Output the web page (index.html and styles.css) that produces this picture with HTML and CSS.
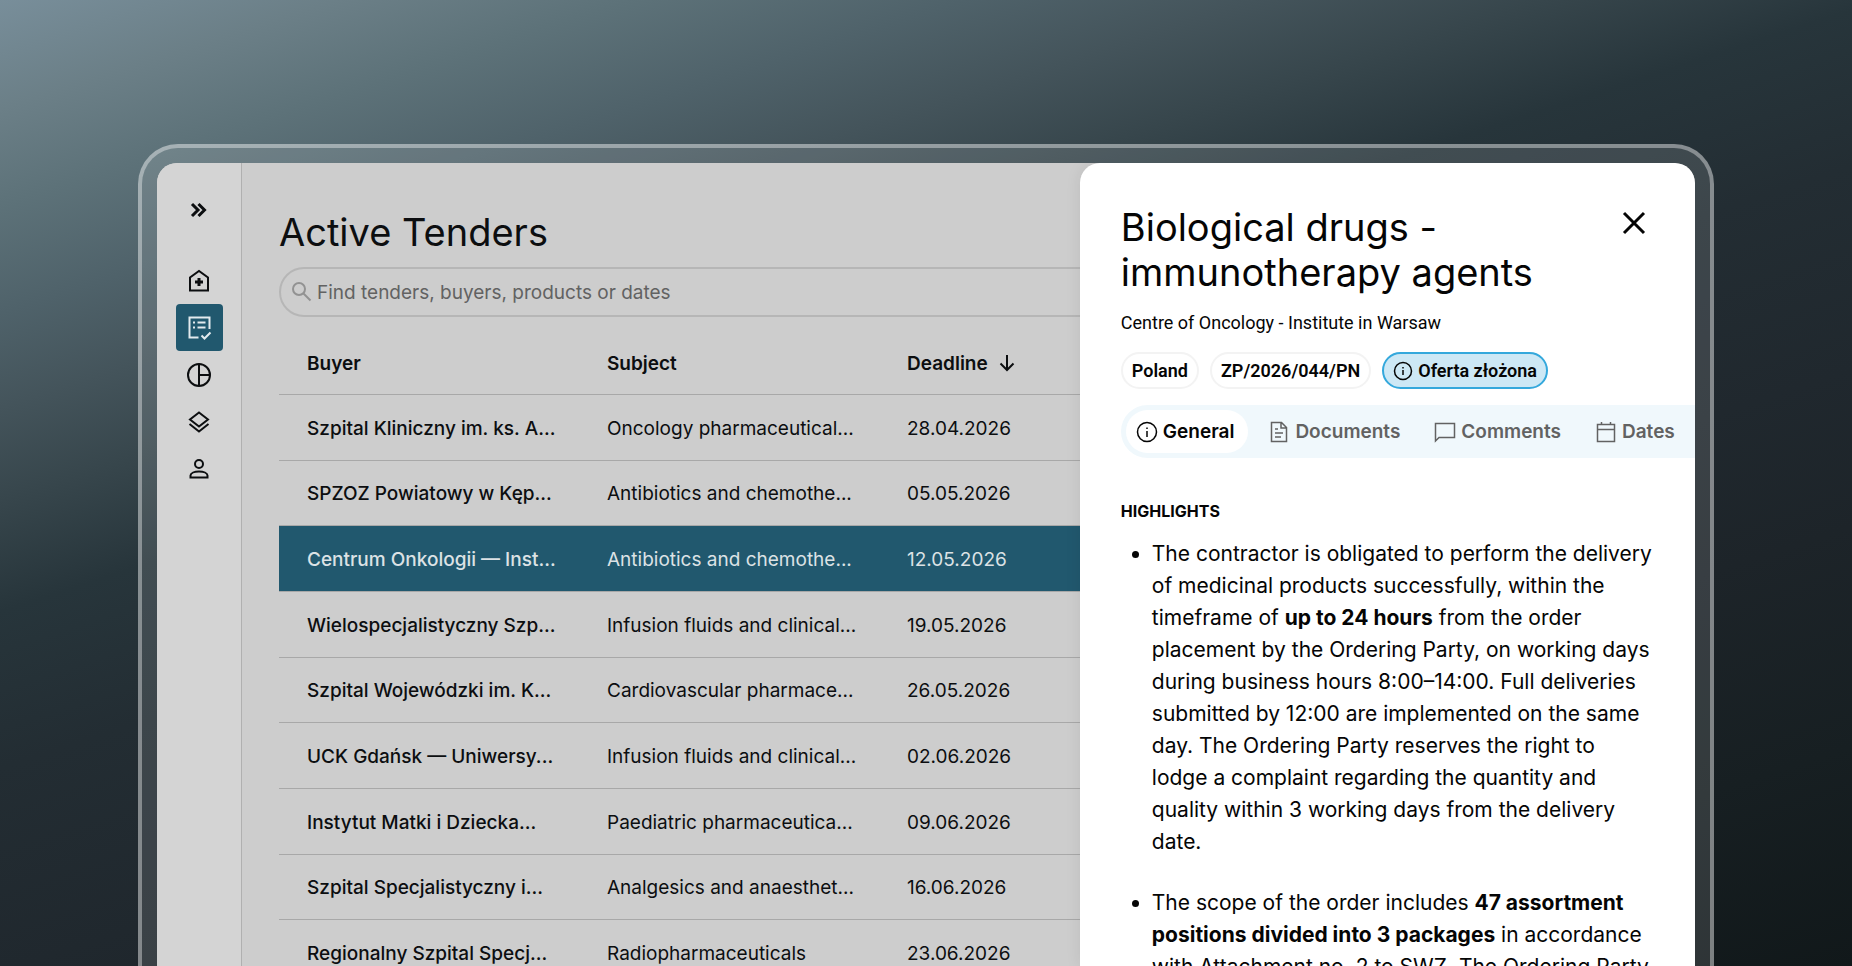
FILE: index.html
```html
<!DOCTYPE html>
<html lang="en">
<head>
    <meta charset="UTF-8">
    <meta name="viewport" content="width=device-width, initial-scale=1.0">
    <title>Active Tenders</title>
    <link rel="stylesheet" href="styles.css">
</head>
<body>

    <div class="device">
        <div class="screen">

            <aside class="sidebar">
                <button class="side-item toggle" aria-label="Expand menu">
                    <svg width="24" height="24" viewBox="0 0 24 24"><path d="M5 6l6 6-6 6M11.500 6l6 6-6 6"/></svg>
                </button>
                <nav class="side-nav">
                    <a class="side-item" href="#home" aria-label="Home">
                        <svg width="24" height="24" viewBox="0 0 24 24"><path d="M3 21.500V8.500L12 2l9 6.500v13z"/><path class="thick" d="M12 9v8M8 13h8"/></svg>
                    </a>
                    <a class="side-item active" href="#tenders" aria-label="Tenders">
                        <svg width="26" height="26" viewBox="0 0 26 26"><path d="M12.500 22.500H3.500v-20h20v11.500M7 7.500h2M7 12.500h2M11.500 7.500h8M11.500 12.500h8M15.500 20.500l3 3 6-6"/></svg>
                    </a>
                    <a class="side-item" href="#reports" aria-label="Reports">
                        <svg width="24" height="24" viewBox="0 0 24 24"><circle cx="12" cy="12" r="11"/><path d="M12 1v22M12 12h11"/></svg>
                    </a>
                    <a class="side-item" href="#products" aria-label="Products">
                        <svg width="24" height="24" viewBox="0 0 24 24"><path d="M12 2.500l9 7-9 7-9-7zM2.500 14l9.500 7.500 9.500-7.500"/></svg>
                    </a>
                    <a class="side-item" href="#profile" aria-label="Profile">
                        <svg width="24" height="24" viewBox="0 0 24 24"><circle cx="12" cy="7" r="4"/><path d="M3.500 20.500v-2c0-2.500 4-4 8.500-4s8.500 1.500 8.500 4v2z"/></svg>
                    </a>
                </nav>
            </aside>

            <main class="content">
                <h1>Active Tenders</h1>

                <label class="search">
                    <svg width="20" height="20" viewBox="0 0 20 20"><circle cx="7" cy="7" r="6"/><path d="M11.500 11.500L18.500 18.500"/></svg>
                    <input type="search" placeholder="Find tenders, buyers, products or dates" aria-label="Search tenders">
                </label>

                <table class="tenders">
                    <thead>
                        <tr>
                            <th scope="col">Buyer</th>
                            <th scope="col">Subject</th>
                            <th scope="col">Deadline <svg width="16" height="18" viewBox="0 0 16 18"><path d="M8 1v15M1.500 9.500L8 16l6.500-6.500"/></svg></th>
                        </tr>
                    </thead>
                    <tbody>
                        <tr><td>Szpital Kliniczny im. ks. A...</td><td>Oncology pharmaceutical...</td><td>28.04.2026</td></tr>
                        <tr><td>SPZOZ Powiatowy w Kęp...</td><td>Antibiotics and chemothe...</td><td>05.05.2026</td></tr>
                        <tr class="selected"><td>Centrum Onkologii — Inst...</td><td>Antibiotics and chemothe...</td><td>12.05.2026</td></tr>
                        <tr><td>Wielospecjalistyczny Szp...</td><td>Infusion fluids and clinical...</td><td>19.05.2026</td></tr>
                        <tr><td>Szpital Wojewódzki im. K...</td><td>Cardiovascular pharmace...</td><td>26.05.2026</td></tr>
                        <tr><td>UCK Gdańsk — Uniwersy...</td><td>Infusion fluids and clinical...</td><td>02.06.2026</td></tr>
                        <tr><td>Instytut Matki i Dziecka...</td><td>Paediatric pharmaceutica...</td><td>09.06.2026</td></tr>
                        <tr><td>Szpital Specjalistyczny i...</td><td>Analgesics and anaesthet...</td><td>16.06.2026</td></tr>
                        <tr><td>Regionalny Szpital Specj...</td><td>Radiopharmaceuticals</td><td>23.06.2026</td></tr>
                    </tbody>
                </table>
            </main>

            <section class="panel">
                <div class="panel-head">
                    <h2>Biological drugs - immunotherapy agents</h2>
                    <button class="close" aria-label="Close">
                        <svg width="24" height="24" viewBox="0 0 24 24"><path d="M2 2l20 20M22 2L2 22"/></svg>
                    </button>
                </div>
                <p class="buyer">Centre of Oncology - Institute in Warsaw</p>

                <div class="chips">
                    <span class="chip">Poland</span>
                    <span class="chip">ZP/2026/044/PN</span>
                    <span class="chip status">
                        <svg width="20" height="20" viewBox="0 0 20 20"><circle cx="10" cy="10" r="8.500"/><path d="M10 9v5M10 6v1.500"/></svg>
                        Oferta złożona
                    </span>
                </div>

                <nav class="tabs">
                    <button class="tab active">
                        <svg width="22" height="22" viewBox="0 0 22 22"><circle cx="11" cy="11" r="9.500"/><path d="M11 10v6M11 6.500v1.500"/></svg>
                        General
                    </button>
                    <button class="tab">
                        <svg width="22" height="22" viewBox="0 0 22 22"><path d="M3.500 1.500h10l5 5v14h-15zM13 2v5h5M7 8h3M7 12h8M7 16h6"/></svg>
                        Documents
                    </button>
                    <button class="tab">
                        <svg width="22" height="22" viewBox="0 0 22 22"><path d="M1.500 20V2.500h19v14H5z"/></svg>
                        Comments
                    </button>
                    <button class="tab">
                        <svg width="22" height="22" viewBox="0 0 22 22"><path d="M2.500 3.500h17v17h-17zM2.500 8.500h17M6.500 1v2.500M15.500 1v2.500"/></svg>
                        Dates
                    </button>
                </nav>

                <div class="panel-body">
                    <h3>HIGHLIGHTS</h3>
                    <ul>
                        <li>The contractor is obligated to perform the delivery of medicinal products successfully, within the timeframe of <strong>up to 24 hours</strong> from the order placement by the Ordering Party, on working days during business hours 8:00–14:00. Full deliveries submitted by 12:00 are implemented on the same day. The Ordering Party reserves the right to lodge a complaint regarding the quantity and quality within 3 working days from the delivery date.</li>
                        <li>The scope of the order includes <strong>47 assortment positions divided into 3 packages</strong> in accordance with Attachment no. 2 to SWZ. The Ordering Party</li>
                    </ul>
                </div>
            </section>

        </div>
    </div>

</body>
</html>
```
FILE: styles.css
```css
* {
    box-sizing: border-box;
}

body {
    margin: 0;
    height: 100vh;
    overflow: hidden;
    font-family: Inter, "Liberation Sans", sans-serif;
    color: #0c0e10;
    background: linear-gradient(162deg, #788e9a 0%, #6b7f87 7%, #5d7279 13%, #4f626a 20%, #44545b 26%, #37464c 32%, #27353b 39%, #232d33 49%, #20282e 62%, #1d2429 72%, #171f22 86%, #11181a 100%);
}

h1, h2, h3, p, ul {
    margin: 0;
}

button, input {
    font-family: inherit;
    background: none;
    border: none;
    padding: 0;
}

svg {
    flex: none;
    fill: none;
    stroke: currentColor;
    stroke-width: 2;
}

/* Device frame */
.device {
    margin: 144px 138px 0;
    height: calc(100vh - 144px);
    padding: 15px 15px 0;
    border: 4px solid rgba(255, 255, 255, 0.45);
    border-bottom: none;
    border-radius: 40px 40px 0 0;
    background-color: rgba(255, 255, 255, 0.12);
    background-clip: padding-box;
}

.screen {
    position: relative;
    display: flex;
    height: 100%;
    overflow: hidden;
    border-radius: 20px 20px 0 0;
    background-color: #cdcdcd;
}

/* Sidebar */
.sidebar {
    flex: none;
    display: flex;
    flex-direction: column;
    align-items: center;
    gap: 24px;
    width: 85px;
    padding-top: 23px;
    background-color: #d4d4d4;
    border-right: 1px solid #b0b0b0;
}

.side-item {
    display: flex;
    align-items: center;
    justify-content: center;
    width: 47px;
    height: 47px;
    border-radius: 4px;
    color: #0c0e10;
}

.side-item.active {
    background-color: #21586e;
    color: #e3eaee;
}

.toggle svg, .thick {
    stroke-width: 3;
}

/* Tender list */
.content {
    flex: 1;
    padding: 47px 37px 0;
}

h1, h2 {
    font-size: 38px;
    font-weight: 400;
    line-height: 45px;
}

.search {
    display: flex;
    align-items: center;
    gap: 5px;
    height: 50px;
    margin-top: 12px;
    padding: 0 11px;
    border: 2px solid #b6b6b6;
    border-radius: 25px;
    color: #929292;
}

.search input {
    flex: 1;
    font-size: 19px;
    outline: none;
}

.search input::placeholder {
    color: #626262;
}

.tenders {
    width: 100%;
    height: 656px;
    margin-top: 13px;
    table-layout: fixed;
    border-spacing: 0;
    font-size: 19px;
}

.tenders th, .tenders td {
    height: 65px;
    padding: 2px 0 0 28px;
    border-bottom: 1px solid #a8a8a8;
    text-align: left;
    white-space: nowrap;
}

.tenders th {
    font-weight: 600;
}

.tenders th:nth-child(-n+2) {
    width: 300px;
}

.tenders th svg {
    margin-left: 6px;
    vertical-align: -2px;
}

.tenders td:first-child {
    font-weight: 500;
}

.tenders .selected {
    background-color: #21586e;
    color: #dce2e5;
}

/* Details panel, slides over the list */
.panel {
    position: absolute;
    top: 0;
    right: 0;
    bottom: 0;
    width: 40%;
    overflow: hidden;
    padding: 42px 0 0 41px;
    border-radius: 20px 20px 0 0;
    background-color: #fff;
    color: #050505;
    box-shadow: 0 0 16px rgba(0, 0, 0, 0.08);
}

.panel-head {
    display: flex;
    justify-content: space-between;
    align-items: flex-start;
    padding-right: 49px;
}

.panel-head h2 {
    max-width: 440px;
}

.close {
    display: flex;
    padding-top: 6px;
    color: #050505;
}

.close svg {
    stroke-width: 3;
}

.buyer {
    margin-top: 16px;
    font-family: Roboto, sans-serif;
    font-size: 18px;
    line-height: 24px;
}

.chips {
    display: flex;
    gap: 11px;
    margin-top: 17px;
}

.chip {
    display: flex;
    align-items: center;
    gap: 5px;
    height: 37px;
    padding: 0 9px;
    border: 2px solid #f3f3f3;
    border-radius: 19px;
    font-family: Roboto, sans-serif;
    font-size: 18px;
    font-weight: 600;
}

.chip.status {
    border-color: #34a8dc;
    background-color: #cde8f5;
}

.chip svg, .tab svg {
    stroke-width: 1.500;
}

.tabs {
    display: flex;
    gap: 10px;
    margin-top: 16px;
    padding: 5px;
    border-radius: 27px 0 0 27px;
    background-color: #f0f8fc;
}

.tab {
    display: flex;
    align-items: center;
    gap: 5px;
    height: 43px;
    padding: 0 14px 0 10px;
    border-radius: 22px;
    font-size: 19px;
    font-weight: 600;
    color: #626262;
}

.tab.active {
    background-color: #fff;
    color: #050505;
}

.panel-body {
    padding: 43px 40px 0 0;
}

h3 {
    font-size: 16px;
    font-weight: 700;
    line-height: 20px;
}

ul {
    margin-top: 17px;
    padding-left: 31px;
    font-size: 21px;
    line-height: 32px;
}

li + li {
    margin-top: 29px;
}
```
